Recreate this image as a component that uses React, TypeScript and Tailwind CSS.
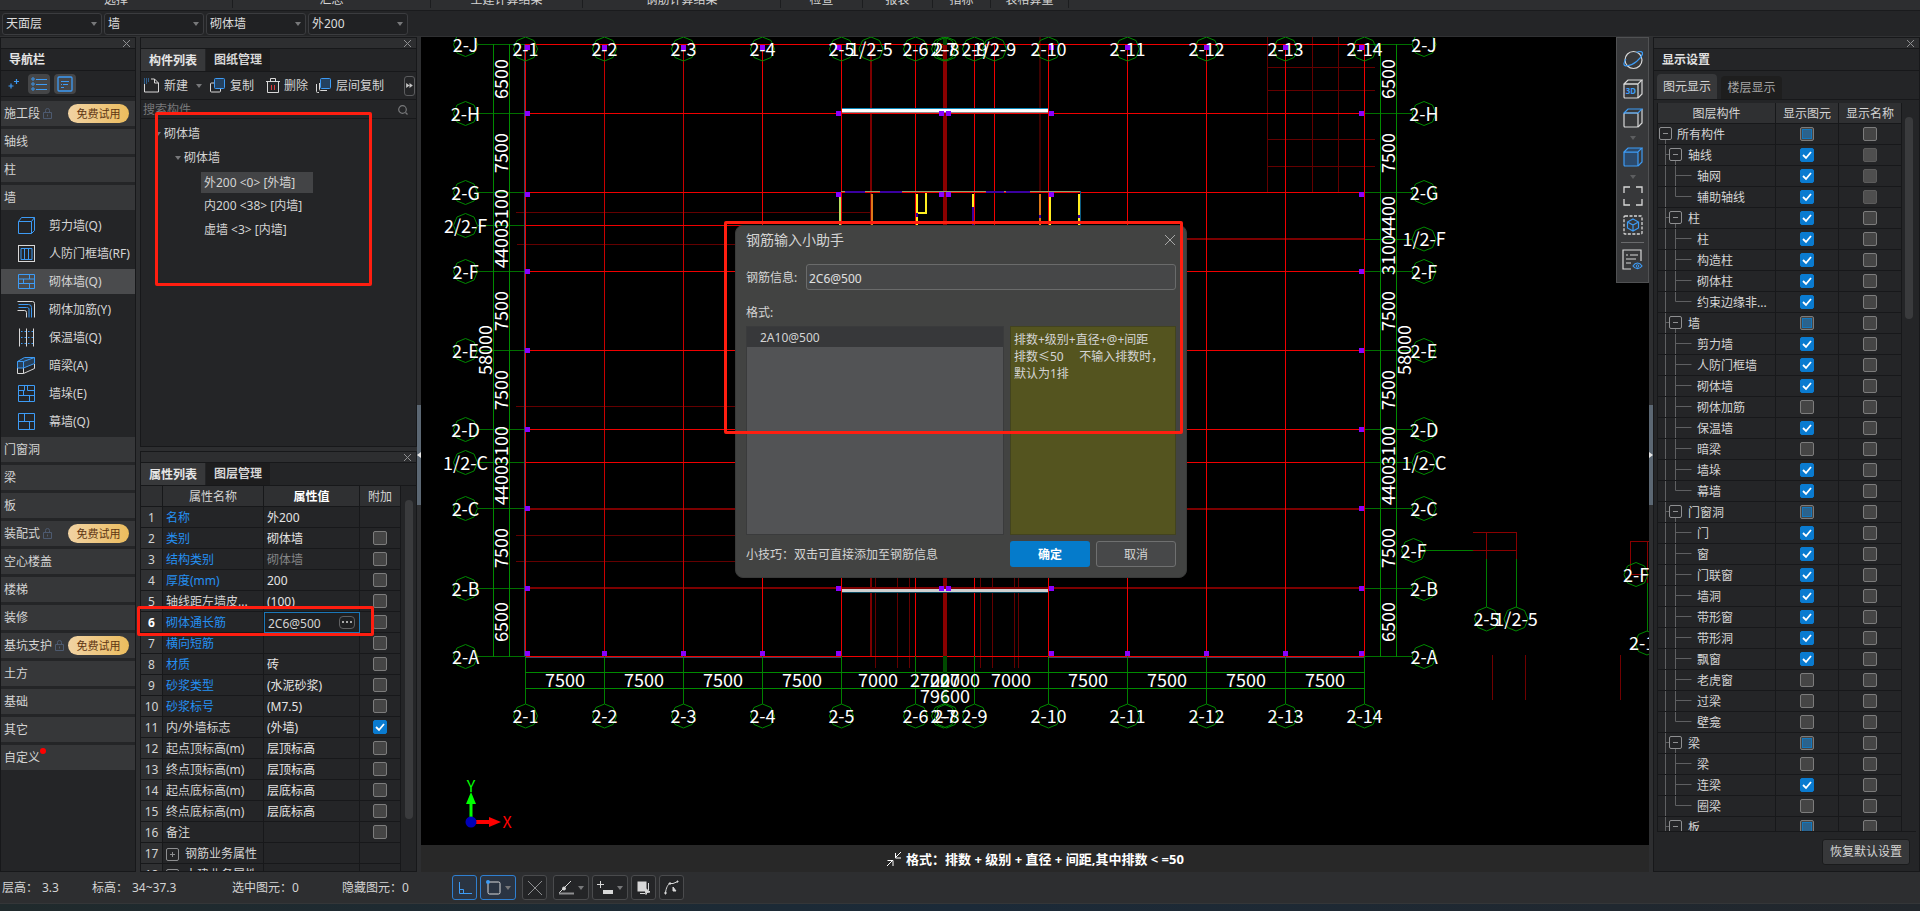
import type { ReactNode } from "react";

type NavRow = {
  label: string;
  locked?: boolean;
  dot?: boolean;
  icon?: ReactNode;
  active?: boolean;
};

type PropRow = {
  name: string;
  value?: string;
  blue?: boolean;
  dim?: boolean;
  check?: "on" | "off";
  group?: boolean;
};

type Mark = "on" | "off" | "part";
type LayerRow = { name: string; level: 0 | 1 | 2; mark: Mark; last?: boolean; disabled?: boolean };

const B = "#3d9bf5";
const W = "#d8d8d8";

const NAV: NavRow[] = [
  { label: "施工段", locked: true },
  { label: "轴线" },
  { label: "柱" },
  { label: "墙" },
  {
    label: "剪力墙(Q)",
    icon: <path d="M1.5 5.5h13v12h-13zM1.5 5.5l3-4h13l-3 4M17.5 1.5v13l-3 3" stroke={B} />,
  },
  {
    label: "人防门框墙(RF)",
    icon: (
      <>
        <rect x="1.5" y="1.5" width="16" height="16" stroke={W} />
        <path d="M4 4.5h11v11H4zM7.5 4.5v11M11.5 4.5v11" stroke={B} />
      </>
    ),
  },
  {
    label: "砌体墙(Q)",
    active: true,
    icon: <path d="M1.5 2.5h16v14h-16zM1.5 7h16M1.5 11.5h16M12.5 2.5V7M6.5 7v4.5M12.5 11.5v5" stroke={B} />,
  },
  {
    label: "砌体加筋(Y)",
    icon: (
      <>
        <path d="M.5 1.5h15a2 2 0 0 1 2 2v14M.5 10.5h7a2 2 0 0 1 2 2v5" stroke={W} />
        <path d="M1.5 4.5h10a3 3 0 0 1 3 3v10M1.5 7.5h8a2 2 0 0 1 2.5 2.5v7.5" stroke={B} />
      </>
    ),
  },
  {
    label: "保温墙(Q)",
    icon: (
      <>
        <path d="M2.5 .5v18M9.5 .5v18M16.5 .5v18" stroke={W} />
        <path d="M4 3.5h12M4 9.5h12M4 15.5h12" stroke={B} strokeDasharray="1.5 2" />
      </>
    ),
  },
  {
    label: "暗梁(A)",
    icon: (
      <>
        <path d="M.5 12v5.5h6V12M6.5 17.5l11-5V8" stroke={W} />
        <path d="M.5 5.5h6V12h-6zM.5 5.5l7-4h10v6L6.5 12M6.5 5.5l11-4" stroke={B} fill="#2b5a88" fillOpacity=".5" />
      </>
    ),
  },
  {
    label: "墙垛(E)",
    icon: <path d="M1.5 1.5h16v16h-16zM1.5 6.5h6v-5M10.5 1.5v5h7M1.5 11.5h16M6.5 6.5v5M12.5 11.5v6" stroke={B} />,
  },
  {
    label: "幕墙(Q)",
    icon: <path d="M1.5 1.5h16v16h-16zM1.5 9.5h16M7.5 1.5v8M12.5 9.5v8" stroke={B} />,
  },
  { label: "门窗洞" },
  { label: "梁" },
  { label: "板" },
  { label: "装配式", locked: true },
  { label: "空心楼盖" },
  { label: "楼梯" },
  { label: "装修" },
  { label: "基坑支护", locked: true },
  { label: "土方" },
  { label: "基础" },
  { label: "其它" },
  { label: "自定义", dot: true },
];

const PROPS: PropRow[] = [
  { name: "名称", value: "外200", blue: true },
  { name: "类别", value: "砌体墙", blue: true, check: "off" },
  { name: "结构类别", value: "砌体墙", blue: true, dim: true, check: "off" },
  { name: "厚度(mm)", value: "200", blue: true, check: "off" },
  { name: "轴线距左墙皮...", value: "(100)", check: "off" },
  { name: "砌体通长筋", value: "2C6@500", blue: true, check: "off" },
  { name: "横向短筋", blue: true, check: "off" },
  { name: "材质", value: "砖", blue: true, check: "off" },
  { name: "砂浆类型", value: "(水泥砂浆)", blue: true, check: "off" },
  { name: "砂浆标号", value: "(M7.5)", blue: true, check: "off" },
  { name: "内/外墙标志", value: "(外墙)", check: "on" },
  { name: "起点顶标高(m)", value: "层顶标高", check: "off" },
  { name: "终点顶标高(m)", value: "层顶标高", check: "off" },
  { name: "起点底标高(m)", value: "层底标高", check: "off" },
  { name: "终点底标高(m)", value: "层底标高", check: "off" },
  { name: "备注", check: "off" },
  { name: "钢筋业务属性", group: true },
  { name: "土建业务属性", group: true },
];

const LAYERS: LayerRow[] = [
  { name: "所有构件", level: 0, mark: "part" },
  { name: "轴线", level: 1, mark: "on", disabled: true },
  { name: "轴网", level: 2, mark: "on", disabled: true },
  { name: "辅助轴线", level: 2, mark: "on", last: true, disabled: true },
  { name: "柱", level: 1, mark: "on" },
  { name: "柱", level: 2, mark: "on" },
  { name: "构造柱", level: 2, mark: "on" },
  { name: "砌体柱", level: 2, mark: "on" },
  { name: "约束边缘非...", level: 2, mark: "on", last: true },
  { name: "墙", level: 1, mark: "part" },
  { name: "剪力墙", level: 2, mark: "on" },
  { name: "人防门框墙", level: 2, mark: "on" },
  { name: "砌体墙", level: 2, mark: "on" },
  { name: "砌体加筋", level: 2, mark: "off" },
  { name: "保温墙", level: 2, mark: "on" },
  { name: "暗梁", level: 2, mark: "off" },
  { name: "墙垛", level: 2, mark: "on" },
  { name: "幕墙", level: 2, mark: "on", last: true },
  { name: "门窗洞", level: 1, mark: "part" },
  { name: "门", level: 2, mark: "on" },
  { name: "窗", level: 2, mark: "on" },
  { name: "门联窗", level: 2, mark: "on" },
  { name: "墙洞", level: 2, mark: "on" },
  { name: "带形窗", level: 2, mark: "on" },
  { name: "带形洞", level: 2, mark: "on" },
  { name: "飘窗", level: 2, mark: "on" },
  { name: "老虎窗", level: 2, mark: "off" },
  { name: "过梁", level: 2, mark: "off" },
  { name: "壁龛", level: 2, mark: "off", last: true },
  { name: "梁", level: 1, mark: "part" },
  { name: "梁", level: 2, mark: "off" },
  { name: "连梁", level: 2, mark: "on" },
  { name: "圈梁", level: 2, mark: "off", last: true },
  { name: "板", level: 1, mark: "part" },
];

const RIBBON: [string, string][] = [
  ["选择", "w-[233px]"],
  ["汇总", "w-[198px]"],
  ["土建计算结果", "w-[152px]"],
  ["钢筋计算结果", "w-[198px]"],
  ["检查", "w-[82px]"],
  ["报表", "w-[70px]"],
  ["指标", "w-[58px]"],
  ["表格算量", "w-[78px]"],
];

/* ---------- small parts ---------- */

function Caret({ className = "" }: { className?: string }) {
  return (
    <svg width="6" height="4" viewBox="0 0 6 4" className={className}>
      <path d="M0 0h6L3 4z" fill="#77787a" />
    </svg>
  );
}

function Tick({ mark, label, disabled }: { mark: Mark; label: string; disabled?: boolean }) {
  return (
    <span className="mx-auto grid h-3.5 w-3.5">
      <input
        type="checkbox"
        aria-label={label}
        defaultChecked={mark === "on"}
        disabled={disabled}
        className="peer col-start-1 row-start-1 h-3.5 w-3.5 appearance-none rounded-xs border border-[#7c7c7c] bg-[#454545] checked:border-[#0a7bd0] checked:bg-[#0a7bd0] disabled:border-[#5c5c5c] disabled:bg-[#4e4e4e]"
      />
      <svg
        viewBox="0 0 14 14"
        className="pointer-events-none col-start-1 row-start-1 hidden h-3.5 w-3.5 peer-checked:block"
      >
        <path d="M3 7l3 3 5-6" fill="none" stroke="#fff" strokeWidth="1.8" />
      </svg>
      {mark === "part" && (
        <span className="pointer-events-none col-start-1 row-start-1 m-0.5 border border-[#1277bd] bg-[#2b628c]" />
      )}
    </span>
  );
}

function TitleBar({ label }: { label: string }) {
  return (
    <div className="flex h-[11px] shrink-0 items-center justify-end border-b border-[#17181a] bg-[#2d2e30] pr-1">
      <button aria-label={label}>
        <svg width="9" height="9" viewBox="0 0 9 9">
          <path d="M1 1l7 7M8 1L1 8" stroke="#8e8f91" />
        </svg>
      </button>
    </div>
  );
}

function PanelTabs({ first, second }: { first: string; second: string }) {
  return (
    <div className="flex h-[23px] shrink-0 items-end gap-px border-b border-[#17181a] font-bold">
      <button className="h-[22px] w-16 bg-[#37383a] pt-0.5 text-[#e6e6e6]">{first}</button>
      <button className="h-[22px] w-16 bg-[#1d1d1e] text-[#d6d6d6]">{second}</button>
    </div>
  );
}

function Expander({ open }: { open?: boolean }) {
  return (
    <svg width="13" height="13" viewBox="0 0 13 13" fill="none" stroke="#8e8f91">
      <rect x=".5" y=".5" width="12" height="12" rx="1.5" />
      <path d={open ? "M4 6.5h5" : "M4 6.5h5M6.5 4v5"} />
    </svg>
  );
}

function Combo({ label, value }: { label: string; value: string }) {
  return (
    <div className="relative">
      <select
        aria-label={label}
        className="block h-[22px] w-[100px] appearance-none rounded-[3px] border border-[#3b3c3f] bg-[#202123] pl-[3px] text-[#dcdcdc]"
      >
        <option>{value}</option>
      </select>
      <Caret className="pointer-events-none absolute top-[9px] right-[5px]" />
    </div>
  );
}

function Splitter({ dir }: { dir: "left" | "right" }) {
  return (
    <div className="flex w-1 shrink-0 items-center bg-[#2d2e30]">
      <div className="flex h-[100px] w-1 items-center bg-[#5b6773]">
        <svg width="4" height="6" viewBox="0 0 4 6">
          <path d={dir === "left" ? "M4 0v6L0 3z" : "M0 0v6l4-3z"} fill="#e4e4e4" />
        </svg>
      </div>
    </div>
  );
}

/* ---------- left side ---------- */

function NavPanel() {
  return (
    <nav className="flex w-[136px] shrink-0 flex-col overflow-hidden border border-[#17181a] bg-[#242527]">
      <TitleBar label="关闭导航栏" />
      <h2 className="flex h-[22px] shrink-0 items-center border-b border-[#17181a] pl-2 font-bold text-[#e6e6e6]">导航栏</h2>
      <div className="flex h-[26px] shrink-0 items-center gap-1 border-b border-[#17181a] pl-[3px]">
        <button aria-label="添加" className="grid h-5 w-5 place-items-center">
          <svg width="12" height="12" viewBox="0 0 12 12" stroke={B} strokeWidth="1.2">
            <path d="M3 5.5v5M.5 8h5M8.5 1v5M6 3.5h5" />
          </svg>
        </button>
        <button aria-label="列表" className="grid h-5 w-[22px] place-items-center rounded-sm bg-[#454648]">
          <svg width="16" height="14" viewBox="0 0 16 14" fill="none" stroke={B}>
            <circle cx="2" cy="2" r="1.2" />
            <circle cx="2" cy="7" r="1.2" />
            <circle cx="2" cy="12" r="1.2" />
            <path d="M5 2.5h11M5 7.5h11M5 12.5h11" />
          </svg>
        </button>
        <button aria-label="详情" className="grid h-5 w-[22px] place-items-center rounded-sm bg-[#454648]">
          <svg width="16" height="16" viewBox="0 0 16 16" fill="none" stroke={B}>
            <rect x="1" y="1" width="14" height="14" rx="1" strokeWidth="1.3" />
            <path d="M4 5.5h8M4 8.5h1M6 8.5h5M4 11.5h3" />
          </svg>
        </button>
      </div>
      <ul className="flex flex-col gap-[3px] pt-1">
        {NAV.map((row) =>
          row.icon ? (
            <li key={row.label}>
              <button
                className={`flex h-[25px] w-full items-center gap-[13px] pl-4 whitespace-nowrap ${row.active ? "bg-[#4a4b4d]" : ""}`}
              >
                <svg width="19" height="19" viewBox="0 0 19 19" fill="none" className="shrink-0">
                  {row.icon}
                </svg>
                {row.label}
              </button>
            </li>
          ) : (
            <li key={row.label}>
              <button className="flex h-[25px] w-full items-center bg-[#363739] pr-1.5 pl-[3px]">
                <span className="relative">
                  {row.label}
                  {row.dot && <i className="absolute -top-0.5 -right-1.5 h-1.5 w-1.5 rounded-full bg-[#f00]" />}
                </span>
                {row.locked && (
                  <>
                    <svg width="9" height="11" viewBox="0 0 9 11" fill="none" stroke="#4d5a70" className="ml-[3px]">
                      <path d="M.5 4.5h8v6h-8zM2.5 4.5V2.5a2 2 0 0 1 4 0v2M4.5 6.5v2" />
                    </svg>
                    <span className="ml-auto h-[19px] w-[61px] rounded-full bg-linear-to-r from-[#f1d3a3] to-[#ebbc5c] text-center text-[11px] leading-[19px] text-[#5e3512]">
                      免费试用
                    </span>
                  </>
                )}
              </button>
            </li>
          ),
        )}
      </ul>
    </nav>
  );
}

function ComponentList() {
  return (
    <section className="flex min-h-0 flex-1 flex-col border border-[#17181a] bg-[#242527]">
      <TitleBar label="关闭构件列表" />
      <PanelTabs first="构件列表" second="图纸管理" />
      <div className="flex h-7 shrink-0 items-center border-b border-[#17181a] pl-[3px]">
        <button className="flex items-center gap-1">
          <svg width="16" height="15" viewBox="0 0 16 15" fill="none" stroke={W}>
            <path d="M.5 6v8h14V5l-4-4H7M10.5 1v4h4" />
            <path d="M0 1h5M0 3h5M0 5h3" stroke={B} strokeDasharray="1 1" />
          </svg>
          <span className="pt-px">新建</span>
          <Caret className="ml-1" />
        </button>
        <button className="ml-2 flex items-center gap-[5px]">
          <svg width="15" height="15" viewBox="0 0 15 15" fill="none">
            <path d="M4 5H1.5a1 1 0 0 0-1 1v7a1 1 0 0 0 1 1h8a1 1 0 0 0 1-1v-2" stroke={W} />
            <rect x="4.5" y=".5" width="10" height="10" rx="1" stroke={B} fill="#24415f" />
          </svg>
          <span className="pt-px">复制</span>
        </button>
        <button className="ml-3 flex items-center gap-1">
          <svg width="14" height="15" viewBox="0 0 14 15" fill="none" stroke={W}>
            <path d="M0 3.5h14M1.5 3.5v11h11v-11M4.5 3V.5h5V3" />
            <path d="M5.5 7v5M8.5 7v5" stroke="#e03a3a" />
          </svg>
          <span className="pt-px">删除</span>
        </button>
        <button className="ml-2 flex items-center gap-[5px]">
          <svg width="15" height="15" viewBox="0 0 15 15" fill="none">
            <path d="M.5 6v7.5a1 1 0 0 0 1 1H3M3.5 5v6.5a1 1 0 0 0 1 1H11" stroke={W} />
            <rect x="4.5" y=".5" width="10" height="10" rx="1" stroke={B} fill="#24415f" />
          </svg>
          <span className="pt-px">层间复制</span>
        </button>
        <button aria-label="更多" className="mr-px ml-auto grid h-5 w-[11px] shrink-0 place-items-center rounded-[3px] border border-[#5b5c5e]">
          <svg width="7" height="5" viewBox="0 0 8 6">
            <path d="M0 0l4 3-4 3zM4 0l4 3-4 3z" fill="#c8c8c8" />
          </svg>
        </button>
      </div>
      <label className="flex h-[19px] shrink-0 items-center border-b border-[#17181a] pt-0.5 pr-2 pl-0.5">
        <input
          aria-label="搜索构件"
          placeholder="搜索构件"
          className="h-4 min-w-0 flex-1 bg-transparent outline-none placeholder:text-[#77787a]"
        />
        <svg width="10" height="10" viewBox="0 0 10 10" fill="none" stroke="#77787a" strokeWidth="1.2">
          <circle cx="4.5" cy="4.5" r="3.8" />
          <path d="M7.5 7.5l2 2" />
        </svg>
      </label>
      <ul className="pt-[3px] leading-6 whitespace-pre">
        <li className="flex items-center gap-[3px] pl-[14px]">
          <Caret />
          砌体墙
        </li>
        <li className="flex items-center gap-[3px] pl-[34px]">
          <Caret />
          砌体墙
        </li>
        <li className="flex h-6 items-center pl-[60px]">
          <span className="h-[21px] w-28 bg-[#434446] pl-[3px] leading-[21px]">外200 &lt;0&gt; [外墙]</span>
        </li>
        <li className="pl-[63px]">内200 &lt;38&gt; [内墙]</li>
        <li className="pl-[63px]">虚墙 &lt;3&gt; [内墙]</li>
      </ul>
    </section>
  );
}

function PropertyTable() {
  const cell = "h-[21px] border-r border-b border-[#17181a] p-0";
  const text = `${cell} pt-0.5`;
  return (
    <section className="flex h-[421px] shrink-0 flex-col border border-[#17181a] bg-[#242527]">
      <TitleBar label="关闭属性列表" />
      <PanelTabs first="属性列表" second="图层管理" />
      <div className="flex min-h-0 flex-1 overflow-hidden">
        <table className="h-min w-[260px] shrink-0 table-fixed border-separate border-spacing-0 leading-4">
          <thead>
            <tr className="bg-[#2f3032]">
              <th className={`${text} w-[22px]`} />
              <th className={`${text} w-[101px] font-normal`}>属性名称</th>
              <th className={`${text} w-24 font-bold text-white`}>属性值</th>
              <th className={`${text} w-[41px] font-normal`}>附加</th>
            </tr>
          </thead>
          <tbody>
            {PROPS.map((p, i) => (
              <tr key={p.name}>
                <td className={`${text} bg-[#2f3032] text-center ${i === 5 ? "font-bold text-white" : ""}`}>{i + 1}</td>
                <td className={`${text} pl-[3px] whitespace-nowrap ${p.blue ? "text-[#2490f2]" : ""}`}>
                  {p.group ? (
                    <span className="flex items-center gap-1.5">
                      <Expander />
                      {p.name}
                    </span>
                  ) : (
                    p.name
                  )}
                </td>
                {i === 5 ? (
                  <td className={`${cell} bg-[#1f2022] outline -outline-offset-1 outline-[#1a77b8]`}>
                    <span className="flex items-center px-1">
                      <input
                        aria-label="砌体通长筋"
                        defaultValue="2C6@500"
                        className="h-[18px] min-w-0 flex-1 bg-transparent pt-0.5 outline-none"
                      />
                      <button aria-label="编辑钢筋" className="grid h-[13px] w-4 place-items-center rounded-sm border border-[#5f6062]">
                        <svg width="10" height="2" viewBox="0 0 10 2">
                          <path d="M0 0h2v2H0zM4 0h2v2H4zM8 0h2v2H8z" fill="#a8a8a8" />
                        </svg>
                      </button>
                    </span>
                  </td>
                ) : (
                  <td className={`${text} pl-[3px] ${p.dim ? "text-[#858688]" : "text-[#e4e4e4]"}`}>{p.value}</td>
                )}
                <td className={cell}>{p.check && <Tick mark={p.check} label={`附加${p.name}`} />}</td>
              </tr>
            ))}
          </tbody>
        </table>
        <div className="flex-1 pt-[14px] pl-1">
          <div className="h-[319px] w-2 rounded-full bg-[#3a3b3d]" />
        </div>
      </div>
    </section>
  );
}

/* ---------- drawing area ---------- */

const AXES_X: [string, number][] = [
  ["2-1", 525.5],
  ["2-2", 604.5],
  ["2-3", 683.5],
  ["2-4", 762.5],
  ["2-5", 841.5],
  ["2-6", 915.5],
  ["2-7", 943.5],
  ["2-8", 946.5],
  ["2-9", 974.5],
  ["2-10", 1048.5],
  ["2-11", 1127.5],
  ["2-12", 1206.5],
  ["2-13", 1285.5],
  ["2-14", 1364.5],
];

const AXES_LEFT: [string, number][] = [
  ["2-J", 44.5],
  ["2-H", 113.5],
  ["2-G", 192.5],
  ["2/2-F", 225.5],
  ["2-F", 271.5],
  ["2-E", 350.5],
  ["2-D", 429.5],
  ["1/2-C", 462.5],
  ["2-C", 508.5],
  ["2-B", 588.5],
  ["2-A", 656.5],
];
const AXES_RIGHT: [string, number][] = AXES_LEFT.map(([n, y]) => (n === "2/2-F" ? ["1/2-F", 239] : [n, y]));

const DIMS_LEFT: [string, number][] = [
  ["6500", 79], ["7500", 153], ["3100", 209], ["4400", 248], ["7500", 311],
  ["7500", 390], ["3100", 446], ["4400", 485], ["7500", 548], ["6500", 622],
];
const DIMS_RIGHT: [string, number][] = DIMS_LEFT.map(([t, y]) =>
  y === 209 ? ["4400", 216] : y === 248 ? ["3100", 255] : [t, y],
);
const DIMS_BOTTOM: [string, number][] = [
  ["7500", 565], ["7500", 644], ["7500", 723], ["7500", 802], ["7000", 878], ["2700", 930], ["200", 945],
  ["2700", 960], ["7000", 1011], ["7500", 1088], ["7500", 1167], ["7500", 1246], ["7500", 1325],
];

const COLUMNS: [number, number][] = [
  ...[525, 602, 681, 760, 836, 1049, 1125, 1204, 1283, 1359].flatMap((x): [number, number][] => [[x, 45], [x, 651]]),
  ...[111, 192, 269, 348, 427, 506, 586].flatMap((y): [number, number][] => [[525, y], [1359, y]]),
  ...[111, 192, 586].flatMap((y): [number, number][] => [[836, y], [939, y], [946, y], [1049, y]]),
];

function Bubble({ x, y, text }: { x: number; y: number; text: string }) {
  const pts = Array.from({ length: 8 }, (_, i) => {
    const a = (i * Math.PI) / 4;
    return `${(x + 12 * Math.sin(a)).toFixed(1)},${(y - 12 * Math.cos(a)).toFixed(1)}`;
  }).join(" ");
  return (
    <g>
      <polygon points={pts} fill="none" stroke="#008a00" />
      <text x={x} y={y + 7} fill="#fff" textAnchor="middle">
        {text}
      </text>
    </g>
  );
}

function VText({ x, y, text }: { x: number; y: number; text: string }) {
  return (
    <text transform={`translate(${x + 7} ${y}) rotate(-90)`} fill="#fff" textAnchor="middle">
      {text}
    </text>
  );
}

function Plan() {
  return (
    <svg
      viewBox="421 37 1228 808"
      preserveAspectRatio="xMinYMin slice"
      className="absolute inset-0 h-full w-full font-['Noto_Sans_CJK_SC',sans-serif] text-[18px]"
    >
      <g fill="none" shapeRendering="crispEdges">
        {/* secondary axes */}
        <path
          d="M516 212.5h355M517 244.5h230M516 406.5h230M516 535.5h230M516 561.5h230M1267.5 37v155M1312.5 37v155M1338.5 37v155M1267 67.5h108M1267 90.5h108M1267 139.5h108M1267 166.5h108M875.5 578v90M897.5 578v90M909.5 578v90M980.5 578v90M992.5 578v90M1014.5 578v90M1018.5 578v90"
          stroke="#640000"
        />
        <path d="M1040 37v155" stroke="#3c0000" strokeWidth="2" />
        <path d="M871 44v612" stroke="#7c0000" strokeWidth="2" />
        <path d="M525 509h839M525 588h839M1048 239h316" stroke="#7c0000" strokeWidth="2" />
        {/* main grid */}
        {AXES_X.filter(([n]) => n !== "2-7" && n !== "2-8").map(([n, x]) => (
          <path key={n} d={`M${x} 44V656`} stroke={n === "2-2" || n === "2-3" ? "#c80000" : "#f00000"} />
        ))}
        <path d="M994.5 44v190" stroke="#f00000" />
        {AXES_LEFT.filter(([n]) => n !== "2-B" && n !== "2-C").map(([n, y]) => (
          <path key={n} d={`M525 ${y}H${n === "2/2-F" ? 750 : 1364}`} stroke="#f00000" />
        ))}
        {/* leaders and dimension lines */}
        {AXES_X.map(([n, x]) => (
          <path key={n} d={`M${x} 656V704`} stroke="#008000" />
        ))}
        {AXES_LEFT.map(([n, y]) => (
          <path key={n} d={`M478 ${y}H525`} stroke="#007000" />
        ))}
        {AXES_RIGHT.map(([n, y]) => (
          <path key={n} d={`M1365 ${y}H1412`} stroke="#007000" />
        ))}
        <path
          d="M493.5 44v613M509.5 44v613M1380.5 44v613M1396.5 44v613M525 672.5h840M525 688.5h840"
          stroke="#008a00"
        />
        <path d="M945 44v612" stroke="#8a0000" strokeWidth="4" />
        <path d="M945 37v8M945 656v48" stroke="#004a00" strokeWidth="4" />
        {/* walls */}
        <path d="M524.5 44v612M525 657.5h316M1048 657.5h316" stroke="#3c4660" />
        <path d="M842 108.5h206" stroke="#0a86b8" />
        <path d="M842 110.5h206" stroke="#fff" strokeWidth="3" />
        <path d="M842 112.5h206" stroke="#8c8c8c" />
        <path d="M842 590.5h206" stroke="#d0d0d0" strokeWidth="3" />
        <path d="M842 592.5h206" stroke="#0c4a60" />
        <path d="M841 191.5h240" stroke="#8fa06a" />
        <path d="M845 192h20M880 192h22M986 192h18M1006 192h24" stroke="#3a00a0" strokeWidth="2" />
        <path d="M840 194v31" stroke="#b8e060" strokeWidth="2" />
        <path d="M872 194v31M1040 194v31" stroke="#e07818" strokeWidth="2" />
        <path d="M917 194v31M917 213h9v-20M973 194v14M1050 194v31M1079 194v31" stroke="#ffee20" strokeWidth="2" />
        <path d="M1080.5 191v34" stroke="#0c5a80" />
        <path d="M973 207v18M917 213v4M1079 215v3M1040 215v3" stroke="#3a00a0" strokeWidth="2" />
        {/* detached details on the right */}
        <path d="M1473 532.5h43v27M1486.5 532v27M1473 550.5h43M1630.5 575v-33.5h19M1647.5 541v42M1630 574.5h19" stroke="#8a0000" />
        <path d="M1426 550.5h47M1486.5 559v48M1516 559v48M1647 583v48" stroke="#008000" />
        <path d="M1492.5 655v45M1525.5 655v45M1620.5 655v45" stroke="#700000" />
      </g>
      {COLUMNS.map(([x, y]) => (
        <rect key={`${x}-${y}`} x={x} y={y} width="5" height="5" fill="#8a00ff" />
      ))}
      {AXES_X.map(([n, x]) => (
        <g key={n}>
          <Bubble x={x} y={49} text={n} />
          <Bubble x={x} y={716} text={n} />
        </g>
      ))}
      <Bubble x={871} y={49} text="1/2-5" />
      <Bubble x={994.5} y={49} text="1/2-9" />
      {AXES_LEFT.map(([n, y]) => (
        <Bubble key={n} x={465.5} y={y} text={n} />
      ))}
      {AXES_RIGHT.map(([n, y]) => (
        <Bubble key={n} x={1424} y={y} text={n} />
      ))}
      <Bubble x={1413.5} y={550.5} text="2-F" />
      <Bubble x={1486.5} y={619} text="2-5" />
      <Bubble x={1516} y={619} text="1/2-5" />
      <Bubble x={1636} y={574.5} text="2-F" />
      <Bubble x={1647} y={643} text="2-10" />
      {DIMS_LEFT.map(([t, y]) => (
        <VText key={y} x={501} y={y} text={t} />
      ))}
      {DIMS_RIGHT.map(([t, y]) => (
        <VText key={y} x={1388} y={y} text={t} />
      ))}
      <VText x={485} y={350} text="58000" />
      <VText x={1404} y={350} text="58000" />
      {DIMS_BOTTOM.map(([t, x]) => (
        <text key={x} x={x} y="687" fill="#fff" textAnchor="middle">
          {t}
        </text>
      ))}
      <text x="945" y="703" fill="#fff" textAnchor="middle">
        79600
      </text>
      {/* coordinate tripod */}
      <path d="M471 822v-24" stroke="#0f0" strokeWidth="3" />
      <path d="M471 792l5 12h-10z" fill="#0f0" />
      <path d="M476 822h16" stroke="#f00" strokeWidth="4" />
      <path d="M501 822l-12-5v10z" fill="#f00" />
      <circle cx="471" cy="822" r="5.5" fill="#0000b8" />
      <text x="471" y="792" fill="#0f0" textAnchor="middle" className="text-[16px]">
        Y
      </text>
      <text x="507" y="828" fill="#f00" textAnchor="middle" className="text-[16px]">
        X
      </text>
    </svg>
  );
}

function Cube({ top, fill, three }: { top?: boolean; fill?: boolean; three?: boolean }) {
  const base = fill ? B : W;
  return (
    <svg width="20" height="20" viewBox="0 0 20 20" fill="none" strokeWidth="1.2">
      <rect x="1" y="5" width="14" height="14" rx="1" stroke={base} fill={fill ? "#2c4a6c" : "none"} />
      <path d="M15 19l4-4V1" stroke={base} />
      <path d="M1 5l4-4h14l-4 4z" stroke={top ? B : base} fill={fill ? "#2c4a6c" : "none"} />
      {three && (
        <text x="8" y="15" fill={B} textAnchor="middle" className="text-[8px] font-bold">
          3D
        </text>
      )}
    </svg>
  );
}

function ViewTools() {
  return (
    <div className="absolute top-0 right-0 flex h-[246px] w-[33px] flex-col items-center border border-[#505153] bg-[#37383a] pt-3">
      <button aria-label="动态观察">
        <svg width="20" height="20" viewBox="0 0 20 20" fill="none" strokeWidth="1.2" className="block">
          <circle cx="10.5" cy="10" r="8.5" stroke={W} />
          <path d="M3 9c-3 4-3 8 2 6.5C10 15 18 9 19.500 4c.5-3-3-3-6-1.5" stroke={B} />
        </svg>
      </button>
      <button aria-label="三维" className="mt-[9px]">
        <Cube three />
      </button>
      <button aria-label="俯视" className="mt-[9px]">
        <Cube top />
      </button>
      <div className="grid h-[19px] place-items-center opacity-60">
        <Caret />
      </div>
      <button aria-label="实体显示">
        <Cube fill top />
      </button>
      <div className="grid h-[19px] place-items-center opacity-60">
        <Caret />
      </div>
      <button aria-label="全屏">
        <svg width="20" height="20" viewBox="0 0 20 20" fill="none" stroke={W} strokeWidth="1.3">
          <path d="M1 7V1h6M13 1h6v6M19 13v6h-6M7 19H1v-6" />
        </svg>
      </button>
      <button aria-label="局部三维" className="mt-[9px]">
        <svg width="20" height="20" viewBox="0 0 20 20" fill="none">
          <rect x="1" y="1" width="18" height="18" rx="1" stroke={W} strokeWidth="1.3" strokeDasharray="3 1.5" />
          <path d="M10 4l5.5 3v6L10 16l-5.5-3V7zM4.5 7L10 10l5.5-3M10 10v6" stroke={B} strokeWidth="1.2" />
        </svg>
      </button>
      <div className="mt-[7px] h-px w-[23px] shrink-0 bg-[#6a6b6d]" />
      <button aria-label="显示设置" className="mt-[6px]">
        <svg width="21" height="21" viewBox="0 0 21 21" fill="none">
          <path d="M9 20H1V1h18v11M4 6h2M8 6h8M4 10h10M4 14h5" stroke={W} strokeWidth="1.2" />
          <path d="M11 17c2.5-4 6.5-4 9 0-2.5 3.5-6.5 3.5-9 0z" stroke={B} strokeWidth="1.2" />
          <circle cx="15.5" cy="17" r="1.3" stroke={B} />
        </svg>
      </button>
    </div>
  );
}

function RebarDialog() {
  return (
    <div
      role="dialog"
      aria-label="钢筋输入小助手"
      className="absolute top-[188px] left-[314px] w-[452px] rounded-lg border border-[#393a39] bg-[#424342] px-[10px] pb-[10px]"
    >
      <div className="flex h-7 items-center justify-between text-[14px]">
        钢筋输入小助手
        <button aria-label="关闭">
          <svg width="12" height="12" viewBox="0 0 12 12" stroke="#a8a8a8">
            <path d="M1 1l10 10M11 1L1 11" />
          </svg>
        </button>
      </div>
      <div className="mt-[10px] flex h-[26px] items-center">
        <label htmlFor="rebar" className="w-[60px] pt-0.5">
          钢筋信息:
        </label>
        <input
          id="rebar"
          defaultValue="2C6@500"
          className="h-[26px] min-w-0 flex-1 rounded-[3px] border border-[#6a6b6b] bg-[#464748] px-0.5 pt-0.5 text-[#e0e0e0] outline-none"
        />
      </div>
      <div className="h-9 pt-[15px] leading-4">格式:</div>
      <div className="flex h-[209px] gap-1.5">
        <ul className="flex-1 border border-[#3a3b3c] bg-[#525355]">
          <li className="h-[20px] bg-[#37383a] pl-[13px] leading-[21px]">2A10@500</li>
        </ul>
        <p className="w-[166px] border border-[#42431f] bg-[#54541f] py-1 pl-[3px] leading-[17px] whitespace-pre">
          {"排数+级别+直径+@+间距\n排数≤50     不输入排数时，\n默认为1排"}
        </p>
      </div>
      <div className="mt-1.5 flex h-[26px] items-center gap-1.5">
        <span className="flex-1 pt-0.5">小技巧：双击可直接添加至钢筋信息</span>
        <button className="h-[26px] w-20 rounded-[3px] bg-[#057bcb] pt-0.5 font-bold text-white">确定</button>
        <button className="h-[26px] w-20 rounded-[3px] border border-[#6f7070] bg-[#474849] pt-0.5">取消</button>
      </div>
    </div>
  );
}

/* ---------- right side ---------- */

function TreeCell({ row }: { row: LayerRow }) {
  const width = row.level === 0 ? 19 : row.level === 1 ? 30 : 39;
  const box = row.level === 0 ? 1.5 : 11.5;
  return (
    <span className="flex h-5 items-center whitespace-nowrap">
      <svg width={width} height="20" viewBox={`0 0 ${width} 20`} fill="none" stroke="#5f6062" className="shrink-0">
        {row.level === 0 && <path d="M7.5 16v4" />}
        {row.level > 0 && <path d="M7.5 0v20" />}
        {row.level === 1 && <path d="M7.5 9.5h4M17.5 16v4" />}
        {row.level === 2 && <path d={row.last ? "M17.5 0v9.5h16" : "M17.5 0v20M17.5 9.5h16"} />}
        {row.level < 2 && (
          <g stroke="#8e8f91">
            <rect x={box} y="3.5" width="12" height="12" rx="1.5" />
            <path d={`M${box + 3.5} 9.5h5`} />
          </g>
        )}
      </svg>
      <span className="pt-0.5">{row.name}</span>
    </span>
  );
}

function DisplayPanel() {
  const cell = "h-[21px] border-r border-b border-[#17181a] p-0";
  const head = `${cell} pt-0.5 font-normal`;
  return (
    <aside className="flex w-[267px] shrink-0 flex-col border border-[#17181a] bg-[#242527]">
      <TitleBar label="关闭显示设置" />
      <h2 className="flex h-[22px] shrink-0 items-center border-b border-[#17181a] pl-2 font-bold text-[#e0e0e0]">显示设置</h2>
      <div className="flex h-[29px] shrink-0 items-end gap-1 border-b border-[#17181a] pl-[3px]">
        <button className="h-[25px] w-[60px] rounded-t-sm bg-[#37383a]">图元显示</button>
        <button className="h-[23px] w-[61px] rounded-t-sm bg-[#1e1e1e] text-[#a4a4a4]">楼层显示</button>
      </div>
      <div className="mx-[3px] mt-[3px] flex min-h-0 flex-1 overflow-hidden border-b border-[#17181a]">
        <table className="h-min w-[245px] shrink-0 table-fixed border-separate border-spacing-0 border-l border-[#17181a] leading-4">
          <thead>
            <tr className="bg-[#2f3032]">
              <th className={`${head} w-[118px]`}>图层构件</th>
              <th className={`${head} w-[63px]`}>显示图元</th>
              <th className={`${head} w-[63px]`}>显示名称</th>
            </tr>
          </thead>
          <tbody>
            {LAYERS.map((row, i) => (
              <tr key={i}>
                <td className={cell}>
                  <TreeCell row={row} />
                </td>
                <td className={cell}>
                  <Tick mark={row.mark} label={`显示图元 ${row.name}`} />
                </td>
                <td className={cell}>
                  <Tick mark="off" label={`显示名称 ${row.name}`} disabled={row.disabled} />
                </td>
              </tr>
            ))}
          </tbody>
        </table>
        <div className="flex-1 pt-[14px] pl-[3px]">
          <div className="h-[202px] w-2 rounded-full bg-[#3a3b3d]" />
        </div>
      </div>
      <div className="flex h-[39px] shrink-0 items-center justify-end pr-[9px]">
        <button className="h-[26px] w-[88px] rounded-[3px] border border-[#1a1b1c] bg-[#37383a] pt-px">恢复默认设置</button>
      </div>
    </aside>
  );
}

function StatusBar() {
  const tool = "flex h-[25px] items-center justify-center gap-1 rounded-[3px] border";
  const plain = `${tool} border-[#4a4b4d] bg-[#242527]`;
  const on = `${tool} border-[#2f7fd0] bg-[#2a3442]`;
  return (
    <footer className="flex h-[31px] shrink-0 items-center bg-[#2d2e30] pl-0.5 whitespace-nowrap">
      <span className="flex w-[90px]">
        <span className="w-10">层高：</span>3.3
      </span>
      <span className="flex w-[140px]">
        <span className="w-10">标高：</span>34~37.3
      </span>
      <span className="w-[110px]">选中图元：0</span>
      <span className="w-[110px]">隐藏图元：0</span>
      <div className="flex items-center gap-[3px]">
        <button aria-label="正交" className={`${on} w-[25px]`}>
          <svg width="14" height="14" viewBox="0 0 14 14" fill="none" stroke={B}>
            <path d="M1.5 1v11.5H14M1.5 8.5h4v4" />
          </svg>
        </button>
        <button aria-label="捕捉" className={`${on} w-9`}>
          <svg width="15" height="15" viewBox="0 0 15 15" fill="none">
            <rect x="2" y="2" width="12" height="12" rx="1.5" stroke={W} />
            <circle cx="2" cy="2" r="2" fill={B} />
          </svg>
          <Caret />
        </button>
        <button aria-label="交点" className={`${plain} ml-[3px] w-[25px]`}>
          <svg width="16" height="16" viewBox="0 0 16 16" stroke="#8e8f91">
            <path d="M1 1l14 14M15 1L1 15" />
          </svg>
        </button>
        <button aria-label="角度" className={`${plain} ml-[3px] w-9`}>
          <svg width="16" height="14" viewBox="0 0 16 14" fill="none" stroke={W}>
            <path d="M13 0L1 12" />
            <path d="M1 12.5h15" stroke="#8e8f91" strokeWidth="2" />
            <circle cx="6" cy="7.5" r="1.5" fill={W} />
          </svg>
          <Caret />
        </button>
        <button aria-label="偏移" className={`${plain} w-9`}>
          <svg width="16" height="14" viewBox="0 0 16 14">
            <path d="M3.500 0v7M0 3.500h7" stroke={W} />
            <path d="M6 9h10v4H6z" fill={W} />
          </svg>
          <Caret />
        </button>
        <button aria-label="选择图层" className={`${plain} w-[25px]`}>
          <svg width="14" height="14" viewBox="0 0 14 14" fill="none" stroke={W}>
            <rect x="1" y="1" width="8" height="9" fill={W} />
            <path d="M11.5 2v7M3 12.5h5" />
            <path d="M8 7l5 4-3 .5-1 2z" fill={W} />
          </svg>
        </button>
        <button aria-label="折线" className={`${plain} w-[25px]`}>
          <svg width="16" height="15" viewBox="0 0 16 15" fill="none" stroke={W}>
            <path d="M1.5 13C2 8 4 4 6 3.5h3L14 1.5" />
            <path d="M5 3h2v1H5zM13 1h1v1h-1zM1 12h1v2H1zM9 7l3 4H9z" fill={W} />
          </svg>
        </button>
      </div>
    </footer>
  );
}

export default function App() {
  return (
    <div className="flex h-screen flex-col overflow-hidden bg-[#2d2e30] font-['Noto_Sans','Noto_Sans_CJK_SC',sans-serif] text-[12px] leading-4 text-[#d4d4d4]">
      <div className="flex h-[11px] shrink-0 items-end overflow-hidden border-b border-[#1a1b1d] bg-[#2d2e30]">
        {RIBBON.map(([name, w]) => (
          <div key={name} className={`${w} mb-0.5 shrink-0 border-r border-[#1c1d1f] text-center`}>
            {name}
          </div>
        ))}
      </div>
      <div className="flex h-[26px] shrink-0 items-center gap-0.5 border-b border-[#303133] bg-[#242527] pl-0.5">
        <Combo label="楼层" value="天面层" />
        <Combo label="构件类别" value="墙" />
        <Combo label="构件类型" value="砌体墙" />
        <Combo label="构件" value="外200" />
      </div>

      <main className="flex min-h-0 flex-1">
        <NavPanel />
        <div className="relative ml-1 flex w-[277px] shrink-0 flex-col gap-1">
          <ComponentList />
          <PropertyTable />
          <div className="pointer-events-none absolute top-[75px] left-[15px] z-10 h-[174px] w-[217px] rounded-xs border-3 border-[#ff1e10]" />
          <div className="pointer-events-none absolute bottom-[236px] -left-[3px] z-10 h-[30px] w-[237px] rounded-xs border-3 border-[#ff1e10]" />
        </div>
        <Splitter dir="left" />
        <div className="flex min-w-0 flex-1 flex-col">
          <div className="relative min-h-0 flex-1 overflow-hidden bg-black">
            <Plan />
            <ViewTools />
            <RebarDialog />
            <div className="pointer-events-none absolute top-[184px] left-[303px] h-[213px] w-[459px] rounded-xs border-3 border-[#ff1e10]" />
          </div>
          <div className="flex h-[27px] shrink-0 items-center justify-center gap-1 bg-[#282828] text-[13px] font-bold text-white">
            <svg width="16" height="16" viewBox="0 0 16 16" fill="none" stroke="#fff">
              <path d="M15 1L9.5 6.5M9.5 2v5H15M1 15l5.5-5.5M1.5 9.5H7V15" />
            </svg>
            格式：排数 + 级别 + 直径 + 间距,其中排数 &lt; =50
          </div>
        </div>
        <Splitter dir="right" />
        <DisplayPanel />
      </main>

      <StatusBar />
      <div className="h-2 shrink-0 border-t border-[#343638] bg-linear-to-r from-[#202a2c] via-[#1b2a38] to-[#22272c]" />
    </div>
  );
}
